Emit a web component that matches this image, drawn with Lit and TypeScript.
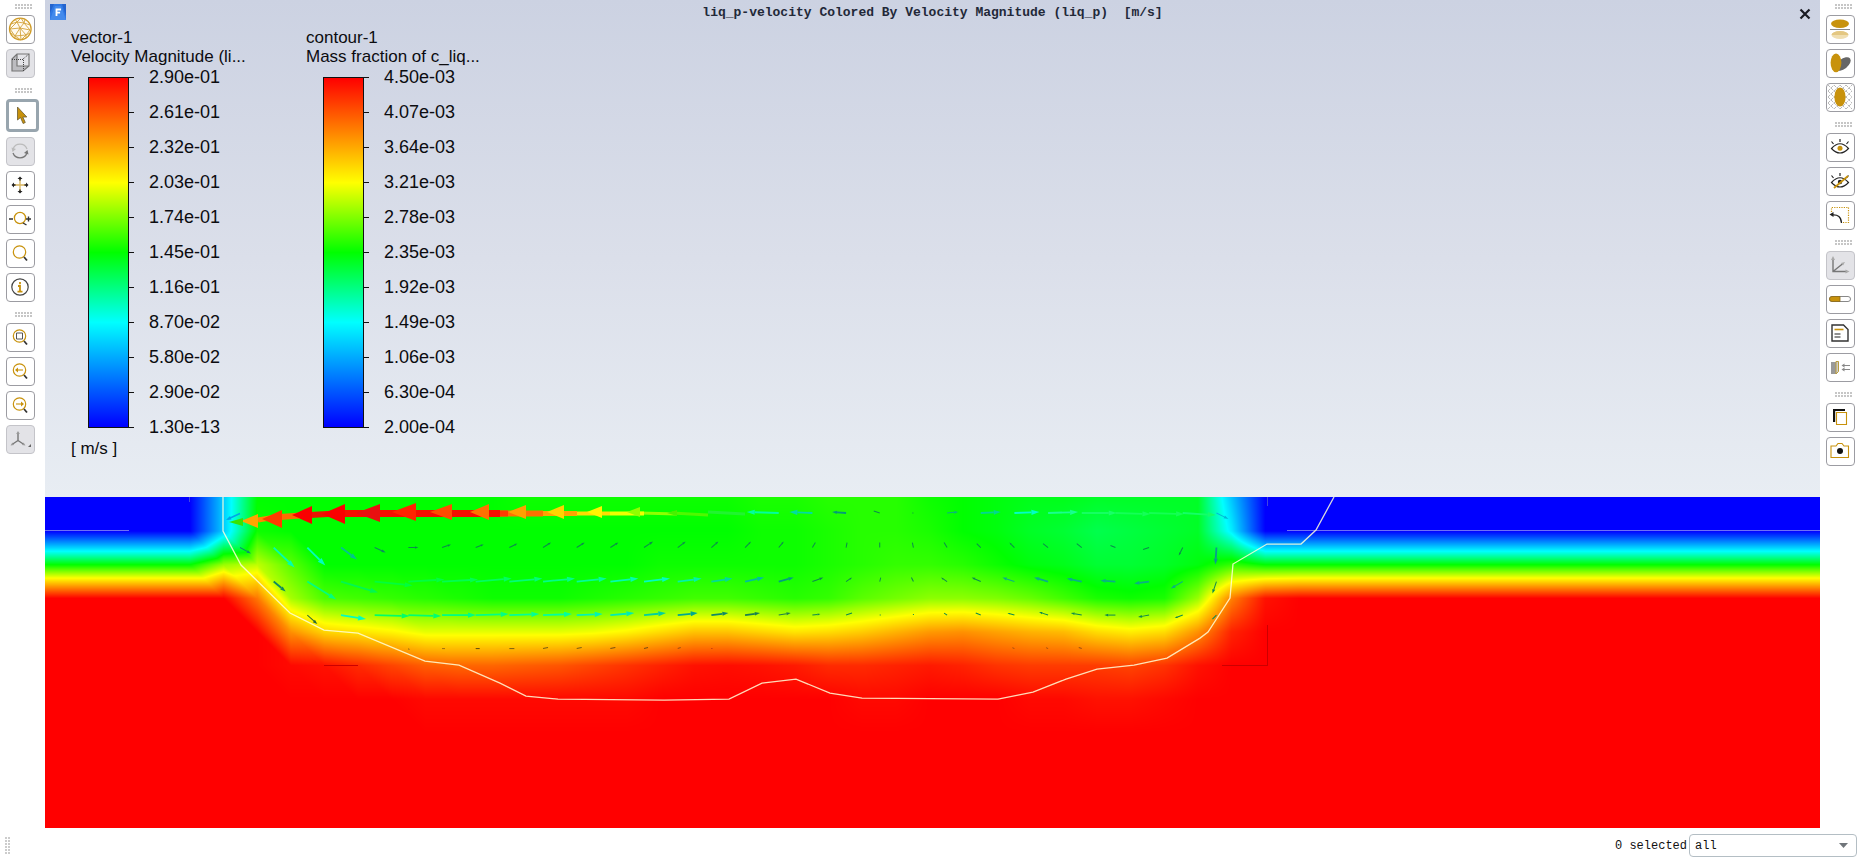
import { LitElement, html, svg, css, type TemplateResult } from "lit";
import { customElement, property, query } from "lit/decorators.js";

const GOLD = "#c8920c";

interface Tool {
  label: string;
  icon: TemplateResult;
  state?: "active" | "off";
}

const handle = svg`<path d="M18 18l3 3.500" stroke="#333" stroke-width="1.800"/>`;
const lens = svg`<circle cx="13.5" cy="13" r="6.200" stroke="${GOLD}" stroke-width="1.200"/>${handle}`;
const eye = svg`<path stroke="#222" stroke-width="1.200" d="M5.500 15.500q8.500-9.500 17 0q-8.500 9-17 0zM14 6v3M5.500 8.500l2 2.500M22.500 8.500l-2 2.500"/>`;

const LEFT: Tool[][] = [
  [
    {
      label: "Show mesh",
      icon: svg`<circle cx="14.300" cy="14" r="10.800" stroke="#d09c28" stroke-width="1.300" fill="#fffaf0"/>
        <path stroke="#d4a43c" stroke-width=".9" d="M5 9l6-2 7 1 6 2M4 14l7-7 3 6-10 1 5 7 5-8 4-5 6 7-10-2 6 7 4-5M9 21l11-1-5 5-6-4M11 7l4-4 3 5 1-4M9 4l2 3M5 18l4 3v3M24 18l-4 2v3M14 13l1 12"/>`,
    },
    {
      label: "Show outline",
      state: "off",
      icon: svg`<path fill="#bcbcc0" d="M6 10l5-5v12l-5 5zM6 22l5-5h12l-6 5z"/>
        <path stroke="#777" stroke-width="1.200" d="M6 10l5-5h12v12l-6 5H6zM11 5v12h12"/>
        <path stroke="#444" stroke-width="1" stroke-dasharray="1 1" d="M6 10.500h11.500V22M17 10l6-5"/>`,
    },
  ],
  [
    {
      label: "Select",
      state: "active",
      icon: svg`<path fill="${GOLD}" stroke="#6a5a30" stroke-width=".8" d="M11.500 8v13l3-2.500 2.600 6 2.200-1-2.500-5.500h4z"/>`,
    },
    {
      label: "Rotate view",
      state: "off",
      icon: svg`<path stroke="#bbb" stroke-width="1.300" d="M7 12a7.500 7.500 0 0 1 14 0"/><path fill="#bbb" d="M5.500 10.500l1 4.500 3.500-3z"/>
        <path stroke="#777" stroke-width="1.300" d="M7 16a7.500 7.500 0 0 0 14 0"/><path fill="#777" d="M22.500 17.500l-1-4.500-3.500 3z"/>`,
    },
    {
      label: "Pan",
      icon: svg`<path stroke="#d8b45c" stroke-width="1.300" d="M14 8v12M8 14h12"/>
        <path fill="#222" d="M14 5.500l2.500 2.500h-5zM14 22.500l2.500-2.500h-5zM5.500 14l2.500-2.500v5zM22.500 14l-2.500-2.500v5z"/>
        <path stroke="#222" stroke-width="1.400" d="M14 7.500v2M14 20.500v-2M7.500 14h2M20.500 14h-2"/>`,
    },
    {
      label: "Zoom in and out",
      icon: svg`<circle cx="14" cy="13" r="5.600" stroke="${GOLD}" stroke-width="1.300"/>
        <path stroke="#333" stroke-width="1.400" d="M3 14h4M20 14h5M22.500 11.500v5M17 18l3.500 2"/>`,
    },
    { label: "Zoom", icon: lens },
    {
      label: "Probe",
      icon: svg`<circle cx="14" cy="14" r="8.200" stroke="#444" stroke-width="1.200"/>
        <path stroke="${GOLD}" stroke-width="1.800" d="M14 9v2.200M12 13h2v6M11.500 18.600h5"/>`,
    },
  ],
  [
    { label: "Fit to window", icon: svg`${lens}<path stroke="#555" stroke-width="1" d="M10.500 10h6v6h-6z"/>` },
    { label: "Previous view", icon: svg`${lens}<path stroke="${GOLD}" stroke-width="1.100" d="M17 13h-7"/><path fill="${GOLD}" d="M9 13l3-2.500v5z"/>` },
    { label: "Next view", icon: svg`${lens}<path stroke="${GOLD}" stroke-width="1.100" d="M10 13h7"/><path fill="${GOLD}" d="M18 13l-3-2.500v5z"/>` },
    {
      label: "Axes orientation",
      state: "off",
      icon: svg`<path stroke="#777" stroke-width="1.400" d="M12 15.500V8M12 15.500L6 19.500M12 15.500l6 4"/>
        <path fill="#999" d="M12 6l1.800 3h-3.600zM4.500 20.500l2-3 1.500 2.600zM19.500 20.500l-3.500-.5 1.500-2.500z"/><path fill="#666" d="M25 19v3h-3z"/>`,
    },
  ],
];

const RIGHT: Tool[][] = [
  [
    {
      label: "Reflections",
      icon: svg`<ellipse cx="14" cy="8.800" rx="9" ry="4.200" fill="${GOLD}"/><path stroke="#888" d="M4 14.500h20"/>
        <ellipse cx="14" cy="20" rx="8.500" ry="4" fill="#f0deb0"/><path fill="#e4c782" d="M5.500 20a8.500 4 0 0 1 17 0z"/>`,
    },
    {
      label: "Shadows",
      icon: svg`<ellipse cx="17" cy="15" rx="9" ry="5" transform="rotate(-38 17 15)" fill="#666"/><ellipse cx="10" cy="13.800" rx="5.400" ry="9.400" fill="${GOLD}"/>`,
    },
    {
      label: "Ground plane",
      icon: svg`<path stroke="#a8a8a8" stroke-width=".8" stroke-dasharray="3 1" d="M2 8l6-6M2 14L14 2M2 20L20 2M2 26L26 2M8 26L26 8M14 26l12-12M20 26l6-6M2 20l6 6M2 14l12 12M2 8l18 18M2 2l24 24M8 2l18 18M14 2l12 12M20 2l6 6"/>
        <ellipse cx="14" cy="14" rx="5.600" ry="9.600" fill="${GOLD}"/>`,
    },
  ],
  [
    { label: "Show", icon: svg`${eye}<circle cx="14" cy="15.300" r="2.500" fill="${GOLD}"/>` },
    {
      label: "Hide",
      icon: svg`${eye}<circle cx="14" cy="15" r="2.200" fill="#222"/><path stroke="${GOLD}" stroke-width="1.800" d="M22 9L8 21"/>`,
    },
    {
      label: "Restore last hidden",
      icon: svg`<path stroke="${GOLD}" stroke-width="1.200" stroke-dasharray="1.200 1.200" d="M5.500 11V6.500h17v15H17"/>
        <path stroke="#222" stroke-width="1.300" d="M6 14q9-1 9.500 8"/><path fill="#222" d="M3.500 13.500l4-2.500v5z"/>`,
    },
  ],
  [
    {
      label: "Axes",
      state: "off",
      icon: svg`<path stroke="#777" stroke-width="1.400" d="M7 7v13.500h14M7 20.500l10-8"/><path fill="#aaa" d="M7 5l2 4H5zM23.500 20.500l-4-2v4zM19 11l-4 1 2 2.500z"/>`,
    },
    {
      label: "Ruler",
      icon: svg`<rect x="3.500" y="11.500" width="21" height="5" rx="2.500" fill="#fff" stroke="#888" stroke-width="1"/><path fill="${GOLD}" stroke="#8a6a1c" stroke-width=".8" d="M14 11.500H6a2.500 2.500 0 0 0 0 5h8z"/>`,
    },
    {
      label: "Title",
      icon: svg`<path stroke="#333" stroke-width="1.400" d="M6 6h11.500l4.500 4.500V22H6z"/><path stroke="${GOLD}" stroke-width="1.600" d="M8.500 10.500h9"/><path stroke="#222" stroke-width="1.200" d="M8.500 15h6M8.500 18h6"/>`,
    },
    {
      label: "Boundary markers",
      icon: svg`<path fill="#999" d="M5 9h5v12H5z"/><path fill="#ccc" stroke="#b89b3c" stroke-width="1" d="M10 8.500h2.500v10L10 21z"/>
        <path stroke="#888" stroke-width="1.200" d="M17 12.500h7M17 16.500h7"/><path fill="#888" d="M15.500 12.500l3-2v4zM15.500 16.500l3-2v4z"/>`,
    },
  ],
  [
    {
      label: "Copy picture",
      icon: svg`<path fill="#111" d="M7 6h12v2H9.200v11H7z"/><path stroke="${GOLD}" stroke-width="1.100" fill="#fff" d="M10.500 9.500h10v12h-10z"/>`,
    },
    {
      label: "Save picture",
      icon: svg`<path stroke="${GOLD}" stroke-width="1.100" d="M5 9h5l2-2.500h4L18 9h4.500v11.500H5z"/><circle cx="14" cy="14" r="3" fill="#111"/>`,
    },
  ],
];

const STOPS: [number, number, number, number][] = [
  [0, 0, 0, 255],
  [0.3, 0, 255, 255],
  [0.5, 0, 255, 0],
  [0.7, 255, 255, 0],
  [1, 255, 0, 0],
];

function rainbow(v: number): [number, number, number] {
  for (let i = 1; i < STOPS.length; i++) {
    const [hi, r1, g1, b1] = STOPS[i];
    if (v <= hi) {
      const [lo, r0, g0, b0] = STOPS[i - 1];
      const t = Math.max(0, (v - lo) / (hi - lo));
      return [r0 + (r1 - r0) * t, g0 + (g1 - g0) * t, b0 + (b1 - b0) * t];
    }
  }
  return [255, 0, 0];
}

/* Drawing domain of the result plane. */
const X0 = 45;
const Y0 = 497;
const W = 1775;
const H = 331;
const CELL = 33.6;
const FIRST_X = 189.6;
/* Cells left of this column index are split along their falling diagonal. */
const SPLIT_COLUMNS = 8;

/* Nodal mass fraction (0 to 1), one entry per column, rows from the surface down. */
const FIELD: number[][] = [
  [0, 0, 0.5, 1, 1, 1, 1, 1],
  [0.24, 0.24, 0.62, 1, 1, 1, 1, 1],
  [0.5, 0.51, 0.65, 0.86, 1, 1, 1, 1],
  [0.5, 0.5, 0.57, 0.63, 0.83, 0.99, 1, 1],
  [0.5, 0.5, 0.5, 0.56, 0.75, 0.98, 1, 1],
  [0.5, 0.5, 0.5, 0.55, 0.73, 0.95, 1, 1],
  [0.5, 0.5, 0.5, 0.54, 0.71, 0.92, 1, 1],
  [0.5, 0.5, 0.5, 0.53, 0.68, 0.89, 0.99, 1],
  [0.5, 0.5, 0.5, 0.52, 0.68, 0.88, 0.99, 1],
  [0.5, 0.5, 0.5, 0.51, 0.68, 0.88, 0.99, 1],
  [0.51, 0.5, 0.5, 0.51, 0.68, 0.89, 0.99, 1],
  [0.51, 0.5, 0.5, 0.51, 0.68, 0.9, 0.99, 1],
  [0.51, 0.5, 0.5, 0.52, 0.69, 0.92, 0.99, 1],
  [0.51, 0.5, 0.5, 0.53, 0.71, 0.94, 0.99, 1],
  [0.51, 0.5, 0.51, 0.54, 0.74, 0.96, 1, 1],
  [0.51, 0.5, 0.51, 0.55, 0.77, 0.98, 1, 1],
  [0.51, 0.5, 0.51, 0.55, 0.77, 0.985, 1, 1],
  [0.52, 0.51, 0.51, 0.54, 0.75, 0.98, 1, 1],
  [0.52, 0.51, 0.51, 0.53, 0.73, 0.97, 1, 1],
  [0.53, 0.52, 0.52, 0.54, 0.74, 0.95, 1, 1],
  [0.53, 0.53, 0.53, 0.57, 0.76, 0.95, 0.99, 1],
  [0.53, 0.53, 0.54, 0.59, 0.79, 0.96, 0.99, 1],
  [0.51, 0.52, 0.54, 0.61, 0.82, 0.97, 1, 1],
  [0.5, 0.5, 0.53, 0.61, 0.83, 0.96, 1, 1],
  [0.49, 0.49, 0.51, 0.6, 0.81, 0.94, 1, 1],
  [0.48, 0.47, 0.49, 0.58, 0.79, 0.93, 0.99, 1],
  [0.48, 0.46, 0.48, 0.55, 0.78, 0.93, 0.99, 1],
  [0.47, 0.44, 0.46, 0.52, 0.74, 0.93, 0.98, 1],
  [0.47, 0.45, 0.46, 0.51, 0.72, 0.92, 0.98, 1],
  [0.47, 0.46, 0.47, 0.52, 0.74, 0.94, 0.99, 1],
  [0.47, 0.47, 0.49, 0.62, 0.83, 0.98, 1, 1],
  [0.23, 0.28, 0.54, 0.85, 0.96, 1, 1, 1],
  [0, 0, 0.5, 0.98, 1, 1, 1, 1],
  [0, 0, 0.5, 1, 1, 1, 1, 1],
];

function sample(x: number, y: number): number {
  const fx = Math.min(Math.max((x - FIRST_X) / CELL, 0), FIELD.length - 1.001);
  const fy = Math.min(Math.max(y / CELL, 0), 6.999);
  const i = Math.floor(fx);
  const j = Math.floor(fy);
  const u = fx - i;
  const v = fy - j;
  const a = FIELD[i];
  const b = FIELD[i + 1];
  if (i < SPLIT_COLUMNS && j > 0) {
    return v > u
      ? a[j] + (a[j + 1] - a[j]) * v + (b[j + 1] - a[j + 1]) * u
      : a[j] + (b[j] - a[j]) * u + (b[j + 1] - b[j]) * v;
  }
  return (a[j] * (1 - v) + a[j + 1] * v) * (1 - u) + (b[j] * (1 - v) + b[j + 1] * v) * u;
}

/* Velocity glyphs: first column index, row height, then dx, dy and colour for each column. */
type Glyph = [number, number, string];
const D = "#0b8a4e";
const T = "#08b086";
const GLYPHS: { from: number; y: number; list: Glyph[] }[] = [
  {
    from: 16, y: 513,
    list: [[-32, -1, "#00ffa0"], [-23, -1, "#00dca4"], [-14, -1, "#009c78"], [-6, -2, D], [-1, 0, D], [11, -1, T], [20, -1, "#00d890"],
      [25, -1, "#00ffc8"], [30, -1, "#18ff90"], [35, 0, "#18ff68"], [35, 1, "#14ff58"], [35, 1, "#14ff54"], [33, 2, "#14ff68"], [12, 6, "#00b8d8"]],
  },
  {
    from: 0, y: 547.5,
    list: [[11, 6, "#0a9070"], [21, 20, "#00ffb0"], [18, 18, "#00ffc0"], [16, 12, "#00c490"], [11, 5, "#0c8a60"], [10, 0, D], [9, -3, D],
      [8, -3, D], [8, -4, D], [8, -5, D], [8, -5, D], [8, -5, D], [9, -6, D], [8, -6, D], [7, -6, D], [6, -6, D], [5, -6, D], [3, -5, D],
      [1, -5, D], [0, -5, D], [-1, -5, D], [-3, -5, D], [-4, -4, D], [-5, -5, D], [-5, -4, D], [-5, -4, D], [-5, -2, D], [-6, 2, D],
      [-4, 8, D], [-1, 17, "#089c90"]],
  },
  {
    from: 1, y: 581.5,
    list: [[12, 10, "#108860"], [29, 18, "#00ff80"], [37, 11, "#00f850"], [38, 4, "#00ff3c"], [36, -2, "#00ff40"], [36, -2, "#00ff50"],
      [36, -3, "#00ff60"], [33, -3, "#00ff78"], [32, -3, "#00ff88"], [30, -3, "#00ff98"], [28, -3, "#00ffb0"], [26, -3, "#00ffc0"],
      [24, -3, "#00f4a8"], [21, -3, "#00dc98"], [19, -4, "#00c09c"], [15, -4, "#00a080"], [11, -4, D], [6, -4, D], [1, -4, D], [-2, -4, D],
      [-6, -4, D], [-9, -4, D], [-12, -4, T], [-14, -4, T], [-15, -3, T], [-15, -1, T], [-15, 2, T], [-12, 7, T], [-4, 12, D]],
  },
  {
    from: 2, y: 615,
    list: [[10, 9, "#286838"], [25, 4, "#00ffc0"], [35, 1, "#00ff68"], [33, 1, "#00ff70"], [34, 0, "#00ff80"], [33, -1, "#00ff88"],
      [30, -1, "#00ff98"], [29, -1, "#00ffa0"], [26, -1, "#00f4b4"], [24, -2, "#00ecb4"], [22, -2, "#00d0a0"], [20, -2, "#00a890"],
      [17, -2, "#108868"], [15, -2, "#188050"], [12, -2, "#208048"], [8, -1, D], [6, -2, D], [1, 0, D], [0, -1, D], [-3, -2, D],
      [-5, -2, D], [-7, -2, D], [-9, -3, D], [-11, -2, D], [-11, 0, D], [-11, 2, D], [-8, 3, D], [-4, 4, D]],
  },
  {
    from: 5, y: 648.5,
    list: [[1, 1, "#8a6010"], [3, 0, "#a07010"], [4, 0, "#5a4a10"], [5, 0, "#7a6010"], [5, -1, "#7a6010"], [5, -1, "#7a6010"],
      [5, -1, "#7a5010"], [4, -1, "#7a5010"], [3, -1, "#a05010"], [1, 0, "#b03010"]],
  },
  { from: 23, y: 648.5, list: [[-2, -1, "#a05010"], [-2, -1, "#a05010"], [-3, -1, "#a05010"]] },
];

/* Fast jet along the surface: head tip x, tip y, head length, half height, colour. */
const JET: [number, number, number, number, string][] = [
  [229, 522, 14, 4, "#38e400"],
  [241, 521, 17, 7, "#ffa400"],
  [262, 519, 20, 9, "#ff3c00"],
  [292, 515, 20, 9, "#fa0000"],
  [322, 514, 23, 10, "#fa0000"],
  [356, 513, 24, 9, "#e81010"],
  [392, 512, 24, 9, "#ff2400"],
  [430, 512, 22, 8, "#ff4c00"],
  [470, 512, 19, 8, "#ff7000"],
  [508, 512, 18, 7, "#ffa000"],
  [547, 512, 17, 7, "#ffd400"],
  [587, 512, 15, 6, "#fff400"],
  [627, 512, 13, 5, "#90ff00"],
  [667, 513, 10, 3, "#48f000"],
];
const SHAFTS: [number, number, number, number, number, string][] = [
  [258, 520, 276, 517, 5, "#ff8800"],
  [280, 517, 310, 515, 6, "#ff6a00"],
  [310, 515, 345, 513, 6, "#ea1400"],
  [343, 513.5, 500, 513.5, 7, "#f41000"],
  [452, 513.5, 508, 513.5, 6, "#ff3c00"],
  [500, 513.5, 543, 513.5, 6, "#ff7000"],
  [543, 513.5, 577, 513.5, 5, "#ffa400"],
  [577, 513.5, 610, 513.5, 4, "#ffdc00"],
  [610, 513.5, 644, 513.5, 4, "#f0ff00"],
  [640, 513, 677, 514, 3, "#90ff00"],
  [672, 513, 708, 515, 3, "#50f800"],
  [708, 512, 745, 514, 3, "#20f430"],
];

const ISO =
  "223,497 223,531 241,565 290,613 324,630 358,633 425,661 459,665 500,683 526,696 558,699 664,700 729,699 762,683 796,679 830,693 862,698 998,699 1033,692 1066,679 1097,669 1134,665 1167,658 1200,638 1208,632 1230,598 1233,564 1267,544 1301,544 1316,530 1334,497";

@customElement("tool-bar")
class ToolBar extends LitElement {
  @property({ attribute: false }) groups: Tool[][] = [];

  static styles = css`
    :host {
      display: flex;
      flex-direction: column;
      gap: 5px;
      padding: 0 6px;
    }
    .grip {
      width: 17px;
      height: 5px;
      margin: 5px 0 1px 9px;
      background: radial-gradient(circle at 1px 1px, #c6c6c6 0 1px, transparent 1px) 0 0 / 3px 3px;
      flex: none;
    }
    .grip:first-child {
      margin-top: 4px;
    }
    button {
      box-sizing: border-box;
      display: grid;
      width: 29px;
      height: 29px;
      padding: 0;
      border: 1px solid #9c9ca2;
      border-radius: 4px;
      background: #fff;
      flex: none;
    }
    button.off {
      border-color: #c4c4c9;
      background: #e3e3e7;
    }
    button.active {
      width: 33px;
      height: 33px;
      border: 3px solid #98a5ae;
    }
    svg {
      width: 27px;
      height: 27px;
      fill: none;
    }
  `;

  render() {
    return this.groups.map(
      (group) => html`
        <span class="grip"></span>
        ${group.map(
          (tool) => html`<button class=${tool.state ?? ""} type="button" aria-label=${tool.label} title=${tool.label}>
            <svg viewBox=${tool.state === "active" ? "3 3 27 27" : "1 1 27 27"} aria-hidden="true">${tool.icon}</svg>
          </button>`
        )}
      `
    );
  }
}

@customElement("color-legend")
class ColorLegend extends LitElement {
  @property() name = "";
  @property() quantity = "";
  @property() unit = "";
  @property({ attribute: false }) values: string[] = [];

  static styles = css`
    :host {
      display: block;
      width: 235px;
      color: #0c0c10;
      font: 17px/19px "Liberation Sans", Arial, sans-serif;
    }
    p {
      margin: 0;
      white-space: pre;
    }
    .scale {
      display: flex;
      padding: 1px 0 0 17px;
    }
    .bar {
      box-sizing: border-box;
      width: 41px;
      margin: 10px 0 9px;
      border: 1px solid #111;
      background: linear-gradient(to top, #00f, #0ff 30%, #0f0 50%, #ff0 70%, #f00);
    }
    ol {
      display: flex;
      flex-direction: column;
      gap: 15px;
      margin: 0;
      padding: 0;
      list-style: none;
      font-size: 18px;
      line-height: 20px;
    }
    li {
      display: flex;
      align-items: center;
      gap: 15px;
    }
    li::before {
      content: "";
      width: 5px;
      height: 1px;
      background: #111;
    }
    .unit {
      margin-top: 2px;
    }
  `;

  render() {
    return html`
      <p>${this.name}</p>
      <p>${this.quantity}</p>
      <div class="scale">
        <div class="bar"></div>
        <ol>${this.values.map((v) => html`<li>${v}</li>`)}</ol>
      </div>
      <p class="unit">${this.unit}</p>
    `;
  }
}

@customElement("result-plane")
class ResultPlane extends LitElement {
  @query("canvas") canvas!: HTMLCanvasElement;

  static styles = css`
    :host {
      display: grid;
      min-height: 0;
    }
    canvas,
    svg {
      grid-area: 1 / 1;
      width: 100%;
      height: 100%;
      min-height: 0;
    }
  `;

  firstUpdated() {
    const ctx = this.canvas.getContext("2d");
    if (!ctx) return;
    const image = ctx.createImageData(W, H);
    for (let y = 0; y < H; y++) {
      for (let x = 0; x < W; x++) {
        const [r, g, b] = rainbow(sample(x + X0, y));
        const p = (y * W + x) * 4;
        image.data[p] = r;
        image.data[p + 1] = g;
        image.data[p + 2] = b;
        image.data[p + 3] = 255;
      }
    }
    ctx.putImageData(image, 0, 0);
  }

  private glyph(x: number, y: number, [dx, dy, color]: Glyph) {
    const len = Math.hypot(dx, dy);
    const head = Math.min(8, len * 0.35);
    const half = len > 7 ? Math.min(2.6, len * 0.12) : 0;
    const ux = dx / len;
    const uy = dy / len;
    const bx = x + dx - ux * head;
    const by = y + dy - uy * head;
    return svg`<path stroke=${color} stroke-width=${len > 14 ? 1.8 : 1} d="M${x} ${y}L${half ? bx : x + dx} ${half ? by : y + dy}"/>
      <path fill=${color} d="M${x + dx} ${y + dy}L${bx - uy * half} ${by + ux * half}L${bx + uy * half} ${by - ux * half}z"/>`;
  }

  render() {
    return html`
      <canvas width=${W} height=${H}></canvas>
      <svg viewBox="${X0} ${Y0} ${W} ${H}" preserveAspectRatio="none" fill="none" aria-hidden="true">
        <path stroke="#8c90f0" stroke-width=".8" d="M45 530.500h84M1287 530.500h533" />
        <path stroke="#5058d8" stroke-width=".8" d="M189.500 497v5M1267.500 497v9" />
        <path stroke="#cc0000" d="M324 665.500h34M1222 665.500h45.500V625" />
        ${GLYPHS.map((row) => row.list.map((g, i) => this.glyph(240 + 33.67 * (row.from + i), row.y, g)))}
        <path stroke="#00a4e8" stroke-width="1.500" d="M240 513.500L228 519" />
        <path fill="#00a4e8" d="M226 520l4-4 1.500 3.500z" />
        ${[...SHAFTS].reverse().map(([a, b, c, d, w, color]) => svg`<path stroke=${color} stroke-width=${w} d="M${a} ${b}L${c} ${d}"/>`)}
        ${[...JET].reverse().map(
          ([x, y, len, half, color]) => svg`<path fill=${color} d="M${x} ${y}L${x + len} ${y - half}V${y + half}z"/>`
        )}
        <polyline stroke="#ffffd8" stroke-opacity=".85" stroke-width="1.300" points=${ISO} />
      </svg>
    `;
  }
}

@customElement("app-root")
class AppRoot extends LitElement {
  static styles = css`
    :host {
      display: grid;
      grid-template: minmax(0, 1fr) 33px / 45px minmax(0, 1fr) 41px;
      height: 100vh;
      background: #fff;
    }
    .view {
      display: grid;
      grid-template-rows: minmax(0, 3fr) minmax(0, 2fr);
    }
    .upper {
      background: linear-gradient(#ccd2e2, #dbdfea 52%, #e8edf3);
    }
    header {
      display: flex;
      align-items: center;
      gap: 8px;
      height: 26px;
      padding: 0 9px 0 5px;
    }
    h1 {
      flex: 1;
      margin: 0;
      text-align: center;
      white-space: pre;
      color: #222838;
      font: bold 13px/18px "Liberation Mono", monospace;
    }
    .logo {
      width: 16px;
      height: 16px;
      margin-bottom: 2px;
    }
    .close {
      display: grid;
      padding: 2px 0 0;
      border: 0;
      background: none;
    }
    .close svg {
      width: 12px;
      height: 12px;
    }
    .legends {
      display: flex;
      padding: 2px 0 0 26px;
    }
    footer {
      grid-column: 1 / -1;
      display: flex;
      align-items: center;
      justify-content: flex-end;
      gap: 2px;
      padding: 2px 4px 0 5px;
      color: #111;
      font: 12px/16px "Liberation Mono", monospace;
    }
    .grip {
      width: 5px;
      height: 17px;
      margin-right: auto;
      background: radial-gradient(circle at 1px 1px, #ccc 0 1px, transparent 1px) 0 0 / 3px 3px;
    }
    .pick {
      display: grid;
      align-items: center;
      width: 168px;
    }
    .pick > * {
      grid-area: 1 / 1;
    }
    select {
      height: 23px;
      padding: 0 5px;
      border: 1px solid #b4bec4;
      border-radius: 4px;
      appearance: none;
      background: #fff;
      color: inherit;
      font: inherit;
    }
    .pick svg {
      justify-self: end;
      width: 9px;
      height: 5px;
      margin-right: 9px;
      pointer-events: none;
    }
  `;

  render() {
    return html`
      <tool-bar .groups=${LEFT}></tool-bar>
      <main class="view">
        <section class="upper">
          <header>
            <svg class="logo" viewBox="0 0 16 16" aria-hidden="true">
              <path fill="#2f78e4" d="M0 0h16v16H0z" />
              <path fill="#1d55c0" d="M4 0h8l4 12V0H0v9z" opacity=".6" />
              <path fill="#4c92f0" d="M0 16L5 2h6l5 14z" opacity=".7" />
              <path stroke="#fff" stroke-width="1.800" d="M6.500 12V5.500H11M6.500 8.600h3.600" fill="none" />
            </svg>
            <h1>liq_p-velocity Colored By Velocity Magnitude (liq_p)  [m/s]</h1>
            <button class="close" type="button" aria-label="Close">
              <svg viewBox="0 0 12 12" aria-hidden="true"><path d="M1.500 1.500l9 9M10.500 1.500l-9 9" stroke="#1a1c24" stroke-width="2.200" /></svg>
            </button>
          </header>
          <div class="legends">
            <color-legend
              name="vector-1"
              quantity="Velocity Magnitude (li..."
              unit="[ m/s ]"
              .values=${["2.90e-01", "2.61e-01", "2.32e-01", "2.03e-01", "1.74e-01", "1.45e-01", "1.16e-01", "8.70e-02", "5.80e-02", "2.90e-02", "1.30e-13"]}
            ></color-legend>
            <color-legend
              name="contour-1"
              quantity="Mass fraction of c_liq..."
              .values=${["4.50e-03", "4.07e-03", "3.64e-03", "3.21e-03", "2.78e-03", "2.35e-03", "1.92e-03", "1.49e-03", "1.06e-03", "6.30e-04", "2.00e-04"]}
            ></color-legend>
          </div>
        </section>
        <result-plane></result-plane>
      </main>
      <tool-bar .groups=${RIGHT}></tool-bar>
      <footer>
        <span class="grip"></span>
        <label for="filter">0 selected</label>
        <div class="pick">
          <select id="filter"><option>all</option></select>
          <svg viewBox="0 0 9 5" aria-hidden="true"><path d="M0 0h9L4.500 5z" fill="#70757a" /></svg>
        </div>
      </footer>
    `;
  }
}
